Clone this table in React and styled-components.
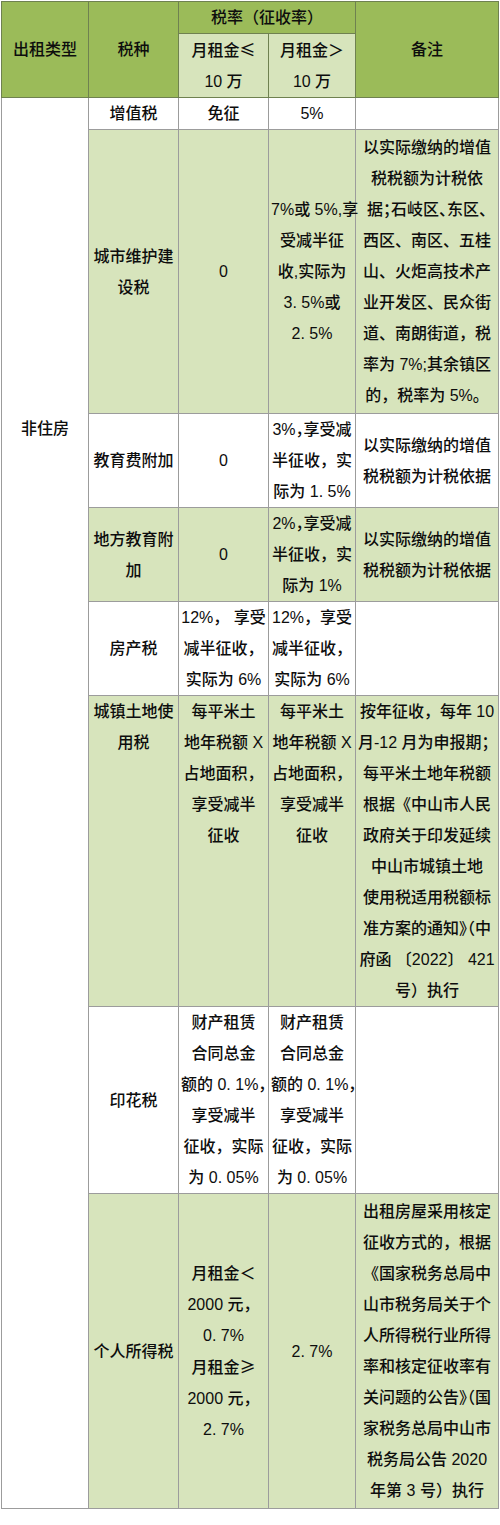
import React from "react";
import styled, { createGlobalStyle } from "styled-components";

const GlobalStyle = createGlobalStyle`
  body {
    margin: 0;
    background: #ffffff;
  }
`;

const Wrapper = styled.div`
  width: 500px;
  padding: 1px 0 0 1px;
  box-sizing: border-box;
  font-family: "Liberation Sans", "Noto Sans CJK SC", sans-serif;
  font-weight: 500;
  color: #0d0d0d;
`;

const Table = styled.table`
  width: 497px;
  table-layout: fixed;
  border-collapse: collapse;
  font-size: 16px;
  line-height: 31px;
`;

const HeadCell = styled.th`
  background: ${(p) => (p.$sub ? "#d7e4bc" : "#9bbb59")};
  border: 1px solid #6f8150;
  font-weight: 500;
  text-align: center;
  vertical-align: middle;
  padding: 0;
  white-space: nowrap;
`;

const Cell = styled.td`
  background: ${(p) => (p.$green ? "#d7e4bc" : "#ffffff")};
  border: 1px solid #9c9c9c;
  text-align: center;
  vertical-align: ${(p) => (p.$top ? "top" : "middle")};
  padding: ${(p) => p.$padY || 0}px 2px;
  white-space: nowrap;
`;

const TypeCell = styled.td`
  background: #ffffff;
  border: 1px solid #9c9c9c;
  text-align: center;
  vertical-align: top;
  padding: 315px 0 0;
`;

const Tight = styled.span`
  font-feature-settings: "halt";
`;

const Sym = styled.span`
  font-family: "Noto Sans CJK SC", sans-serif;
`;

const rows = [
  {
    name: ["增值税"],
    low: ["免征"],
    high: ["5%"],
    note: [],
  },
  {
    green: true,
    padY: 2,
    name: ["城市维护建", "设税"],
    low: ["0"],
    high: ["7%或 5%,享", "受减半征", "收,实际为", "3. 5%或", "2. 5%"],
    note: [
      "以实际缴纳的增值",
      "税税额为计税依",
      { t: "据；石岐区、东区、" },
      "西区、南区、五桂",
      "山、火炬高技术产",
      "业开发区、民众街",
      "道、南朗街道，税",
      "率为 7%;其余镇区",
      "的，税率为 5%。",
    ],
  },
  {
    name: ["教育费附加"],
    low: ["0"],
    high: [{ t: "3%，享受减" }, "半征收，实", "际为 1. 5%"],
    note: ["以实际缴纳的增值", "税税额为计税依据"],
  },
  {
    green: true,
    name: ["地方教育附", "加"],
    low: ["0"],
    high: [{ t: "2%，享受减" }, "半征收，实", "际为 1%"],
    note: ["以实际缴纳的增值", "税税额为计税依据"],
  },
  {
    name: ["房产税"],
    low: ["12%， 享受", "减半征收，", "实际为 6%"],
    high: ["12%，享受", "减半征收，", "实际为 6%"],
    note: [],
  },
  {
    green: true,
    top: true,
    name: ["城镇土地使", "用税"],
    low: ["每平米土", "地年税额 X", "占地面积，", "享受减半", "征收"],
    high: ["每平米土", "地年税额 X", "占地面积，", "享受减半", "征收"],
    note: [
      "按年征收，每年 10",
      "月-12 月为申报期；",
      "每平米土地年税额",
      "根据《中山市人民",
      "政府关于印发延续",
      "中山市城镇土地",
      "使用税适用税额标",
      { t: "准方案的通知》（中" },
      "府函 〔2022〕 421",
      "号）执行",
    ],
  },
  {
    name: ["印花税"],
    low: ["财产租赁", "合同总金", { t: "额的 0. 1%，" }, "享受减半", "征收，实际", "为 0. 05%"],
    high: ["财产租赁", "合同总金", { t: "额的 0. 1%，" }, "享受减半", "征收，实际", "为 0. 05%"],
    note: [],
  },
  {
    green: true,
    padY: 2,
    name: ["个人所得税"],
    low: [
      { s: ["月租金", "＜"] },
      "2000 元，",
      "0. 7%",
      { s: ["月租金", "≥"] },
      "2000 元，",
      "2. 7%",
    ],
    high: ["2. 7%"],
    note: [
      "出租房屋采用核定",
      "征收方式的，根据",
      "《国家税务总局中",
      "山市税务局关于个",
      "人所得税行业所得",
      "率和核定征收率有",
      { t: "关问题的公告》（国" },
      "家税务总局中山市",
      "税务局公告 2020",
      "年第 3 号）执行",
    ],
  },
];

const Line = ({ line }) => {
  if (typeof line === "string") return line;
  if (line.s)
    return (
      <>
        {line.s[0]}
        <Sym>{line.s[1]}</Sym>
      </>
    );
  return <Tight>{line.t}</Tight>;
};

const Lines = ({ lines }) =>
  lines.map((line, i) => (
    <React.Fragment key={i}>
      {i > 0 && <br />}
      <Line line={line} />
    </React.Fragment>
  ));

export default function App() {
  return (
    <Wrapper>
      <GlobalStyle />
      <Table>
        <colgroup>
          <col style={{ width: 87 }} />
          <col style={{ width: 90 }} />
          <col style={{ width: 90 }} />
          <col style={{ width: 87 }} />
          <col style={{ width: 143 }} />
        </colgroup>
        <thead>
          <tr>
            <HeadCell rowSpan={2}>出租类型</HeadCell>
            <HeadCell rowSpan={2}>税种</HeadCell>
            <HeadCell colSpan={2}>税率（征收率）</HeadCell>
            <HeadCell rowSpan={2}>备注</HeadCell>
          </tr>
          <tr>
            <HeadCell $sub>
              月租金<Sym>≤</Sym>
              <br />
              10 万
            </HeadCell>
            <HeadCell $sub>
              月租金<Sym>＞</Sym>
              <br />
              10 万
            </HeadCell>
          </tr>
        </thead>
        <tbody>
          {rows.map((row, i) => (
            <tr key={i}>
              {i === 0 && <TypeCell rowSpan={rows.length}>非住房</TypeCell>}
              <Cell $green={row.green} $top={row.top}>
                <Lines lines={row.name} />
              </Cell>
              <Cell $green={row.green} $top={row.top}>
                <Lines lines={row.low} />
              </Cell>
              <Cell $green={row.green} $top={row.top}>
                <Lines lines={row.high} />
              </Cell>
              <Cell $green={row.green} $top={row.top} $padY={row.padY}>
                <Lines lines={row.note} />
              </Cell>
            </tr>
          ))}
        </tbody>
      </Table>
    </Wrapper>
  );
}
